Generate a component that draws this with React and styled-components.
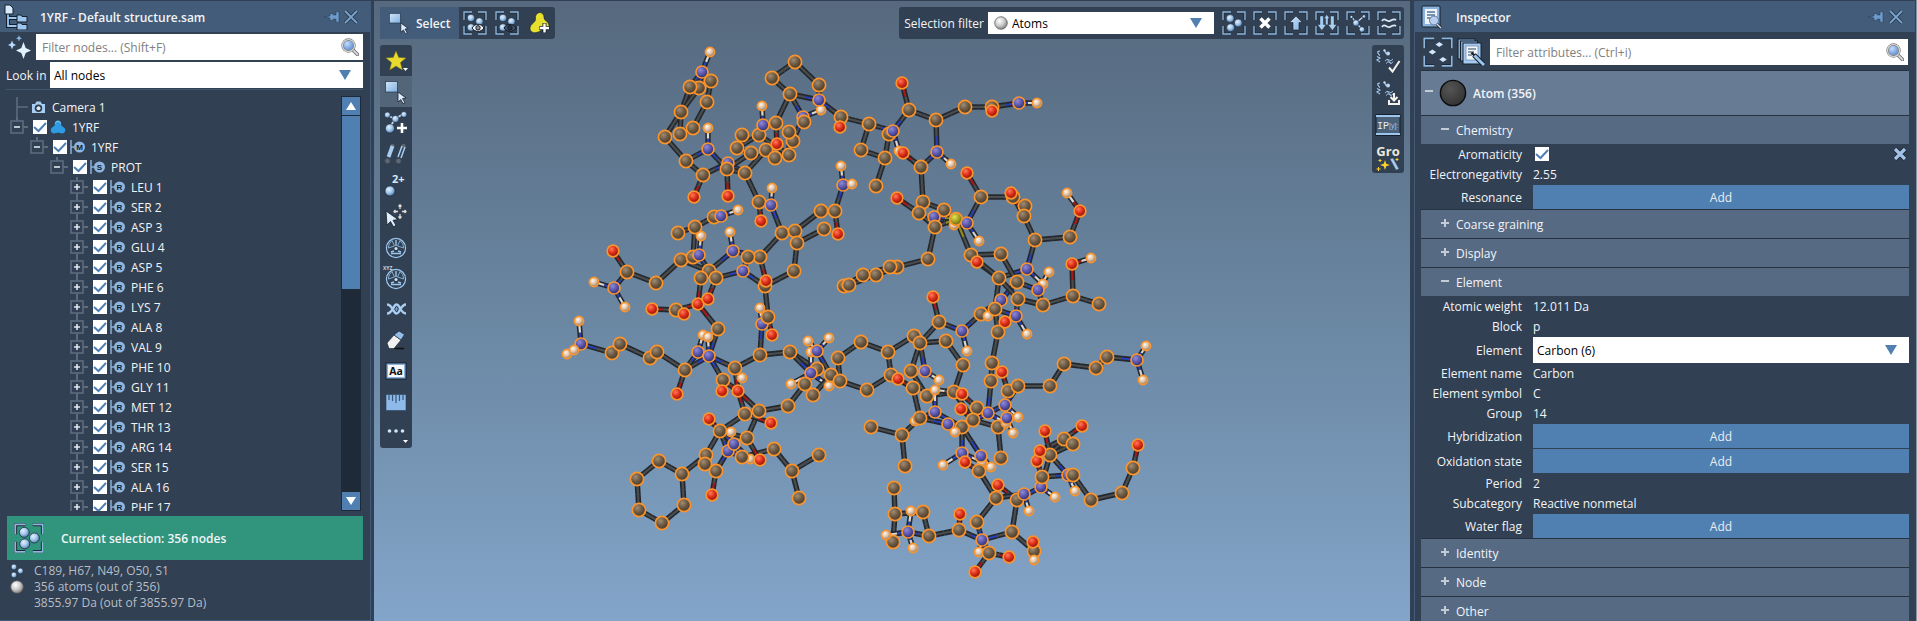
import React from "react";
import styled, { createGlobalStyle } from "styled-components";

const GlobalStyle = createGlobalStyle`
  * {
    box-sizing: border-box;
  }

  body {
    margin: 0;
    background: #314052;
    color: #f2f4f7;
    font-family: "Open Sans", "Noto Sans", sans-serif;
    font-size: 12px;
    line-height: 16px;
    overflow: hidden;
  }

  button, input, select {
    margin: 0;
    padding: 0;
    border: 0;
    border-radius: 0;
    background: none;
    color: inherit;
    font: inherit;
  }

  svg {
    display: block;
    flex: none;
  }
`;

const Screen = styled.div`
  display: flex;
  height: 100vh;
  overflow: hidden;
`;

const Panel = styled.aside`
  width: ${(props) => props.$width};
  flex: none;
  display: flex;
  flex-direction: column;
  margin-top: 1px;
  border: solid #435b78;
  border-width: ${(props) => props.$border};
  overflow: hidden;
`;

const PanelHeader = styled.header`
  height: 31px;
  flex: none;
  display: flex;
  align-items: center;
  gap: ${(props) => props.$gap};
  padding: 0 12px 0 ${(props) => props.$left};
  background: #435c79;
`;

const PanelTitle = styled.h1`
  flex: 1;
  margin: 0;
  padding: 2px 0 0 8px;
  font-size: 12px;
  font-weight: 600;
`;

const IconButton = styled.button`
  display: flex;
  align-items: center;
  justify-content: center;
`;

const FilterRow = styled.div`
  display: flex;
  flex: none;
  align-items: center;
  padding: ${(props) => props.$pad};
`;

const FilterButtons = styled.div`
  display: flex;
  align-items: center;
  gap: 4px;
  margin-right: 5px;
`;

const LookIn = styled.label`
  width: 44px;
  padding-top: 2px;
`;

const Field = styled.div`
  position: relative;
  flex: 1;
  min-width: 0;
  height: ${(props) => props.$height || "26px"};
`;

const TextInput = styled.input`
  width: 100%;
  height: 100%;
  padding: 0 32px 0 6px;
  background: #fff;
  color: #000;

  &::placeholder {
    color: #808080;
    opacity: 1;
  }
`;

const SelectInput = styled.select`
  width: 100%;
  height: 100%;
  padding: 2px 28px 0 ${(props) => props.$left || "4px"};
  appearance: none;
  background: #fff;
  color: #000;
`;

const FieldIcon = styled.span`
  position: absolute;
  top: 0;
  bottom: 0;
  ${(props) => props.$side}: ${(props) => props.$inset};
  display: flex;
  align-items: center;
  pointer-events: none;
`;

const CheckBox = styled.input.attrs({ type: "checkbox" })`
  width: 14px;
  height: 14px;
  flex: none;
  appearance: none;
  background: #fff;

  &:checked {
    background: #fff
      url("data:image/svg+xml,%3Csvg xmlns='http://www.w3.org/2000/svg' viewBox='0 0 14 14'%3E%3Cpath d='M1 7l4.5 4L13 3' fill='none' stroke='%23507fb1' stroke-width='2'/%3E%3C/svg%3E");
  }
`;

/* structure tree */

const TreeArea = styled.div`
  flex: 1;
  min-height: 0;
  display: flex;
  margin: 1px 7px 0 6px;
  padding-top: 6px;
  border-top: 1px solid #42566d;
`;

const Tree = styled.ul`
  flex: 1;
  margin: 0;
  padding: 1px 0 0;
  list-style: none;
  overflow: hidden;
`;

const TreeRow = styled.li`
  height: 20px;
  display: flex;
  align-items: center;
  padding-left: ${(props) => props.$level * 20}px;
`;

const TreeLabel = styled.label`
  display: flex;
  align-items: center;
  margin-left: 5px;
`;

const TreeIcon = styled.span`
  display: flex;
  margin-left: 3px;
`;

const TreeText = styled.span`
  padding: 2px 0 0 6px;
`;

const ScrollBar = styled.div`
  width: 20px;
  display: flex;
  flex-direction: column;
  margin-right: 2px;
  padding: 1px;
  background: #1e2a38;
`;

const ScrollButton = styled.button`
  height: 18px;
  flex: none;
  display: flex;
  align-items: center;
  justify-content: center;
  background: #507fb1;
`;

const ScrollTrack = styled.div`
  flex: 1;
  padding-top: 1px;
`;

const ScrollThumb = styled.div`
  height: 46%;
  background: #507fb1;
`;

const Selection = styled.div`
  height: 44px;
  flex: none;
  display: flex;
  align-items: center;
  gap: 17px;
  margin: 5px 7px 0;
  padding: 0 7px;
  background: #31947d;
  font-weight: 600;
`;

const SelectionText = styled.span`
  padding-top: 2px;
`;

const Stats = styled.ul`
  height: 60px;
  flex: none;
  margin: 0;
  padding: 3px 10px 0;
  list-style: none;
  color: #b8bec6;
`;

const Stat = styled.li`
  height: 16px;
  display: flex;
  align-items: center;
`;

const StatIcon = styled.span`
  width: 24px;
  display: flex;
`;

/* viewport */

const Viewport = styled.main`
  position: relative;
  flex: 1;
  min-width: 0;
  margin: 1px 4px 0 3px;
  padding: 6px;
  display: flex;
  flex-direction: column;
  gap: 6px;
  background: linear-gradient(#56697e, #6c89a5 55%, #83a5c9);
  overflow: hidden;
`;

const Canvas = styled.svg`
  position: absolute;
  inset: 0;
  width: 100%;
  height: 100%;
`;

const Bars = styled.div`
  position: relative;
  display: flex;
  align-items: flex-start;
  justify-content: space-between;
`;

const ToolBar = styled.div`
  display: flex;
  flex-direction: ${(props) => (props.$vertical ? "column" : "row")};
  align-items: center;
  border-radius: 3px;
  background: #314052;
  overflow: hidden;
`;

const ToolButton = styled.button`
  position: relative;
  width: ${(props) => props.$width || "32px"};
  height: ${(props) => props.$height || "31px"};
  display: flex;
  align-items: center;
  justify-content: center;
  background: ${(props) => (props.$active ? "#526579" : "none")};
`;

const ModeButton = styled.button`
  height: 32px;
  display: flex;
  align-items: center;
  gap: 6px;
  padding: 0 9px 0 8px;
  background: #435c79;
  font-weight: 600;
`;

const ModeName = styled.span`
  padding-top: 2px;
`;

const FilterLabel = styled.label`
  padding: 2px 4px 0 5px;
`;

const SelectionField = styled.div`
  width: 226px;
  display: flex;
  margin-right: 4px;
`;

const Corner = styled.svg`
  position: absolute;
  right: 4px;
  bottom: 5px;
`;

const Gro = styled.span`
  font-weight: 700;
  font-size: 13px;
  line-height: 14px;
  color: #e9eadf;
`;

const GroStack = styled.span`
  display: flex;
  flex-direction: column;
  align-items: center;
`;

/* inspector */

const Body = styled.div`
  flex: 1;
  min-height: 0;
  padding: 0 6px;
  overflow: hidden;
`;

const GroupHeader = styled.button`
  width: 100%;
  height: 45px;
  display: flex;
  align-items: center;
  gap: 6px;
  padding: 0 4px;
  border-top: 1px solid #26323f;
  background: #677b95;
  font-weight: 600;
`;

const GroupName = styled.span`
  padding-top: 2px;
`;

const SectionHeader = styled.button`
  width: 100%;
  height: 29px;
  display: flex;
  align-items: center;
  gap: 7px;
  padding: 2px 20px 0;
  border-top: 1px solid #26323f;
  background: #566a84;
`;

const Sign = styled.svg`
  margin-bottom: 4px;
`;

const Property = styled.div`
  min-height: 20px;
  display: grid;
  grid-template-columns: 101px 1fr;
  column-gap: 11px;
  align-items: center;
  padding-top: ${(props) => (props.$control ? "1px" : "0")};
`;

const PropertyName = styled.label`
  padding-top: 2px;
  text-align: right;
`;

const PropertyValue = styled.span`
  padding-top: 2px;
`;

const PropertyControls = styled.span`
  display: flex;
  align-items: center;
  justify-content: space-between;
  padding: 0 2px;
`;

const AddButton = styled.button`
  height: 24px;
  padding-top: 2px;
  background: #507fb1;
  color: #e9eef4;
`;

const Edge = styled.div`
  width: 2px;
  flex: none;
  border-right: 1px solid #8795a5;
`;

/* icons */

const HiddenSvg = styled.svg`
  position: absolute;
`;

const Defs = () => (
  <HiddenSvg width="0" height="0" aria-hidden="true">
    <defs>
      {[
        ["gC", "#a08c74", "#6d5a44", "#453626"],
        ["gN", "#8f8bd6", "#5a56ac", "#2e2b62"],
        ["gO", "#ff7a5c", "#dc2c18", "#84140b"],
        ["gH", "#fff6ea", "#dfc4aa", "#8c7766"],
        ["gS", "#e6e25c", "#a5a321", "#5f5e0e"],
        ["gBlue", "#e4f0fb", "#a3c8ec", "#4e76a4"],
        ["gGrey", "#ffffff", "#cfcfcf", "#7d7d7d"],
        ["gDark", "#555", "#444", "#333"],
        ["gLens", "#c5dcfa", "#86aee6", "#5b86c6"],
      ].map(([id, a, b, c]) => (
        <radialGradient key={id} id={id} cx="38%" cy="34%" r="70%">
          <stop offset="0" stopColor={a} />
          <stop offset="0.5" stopColor={b} />
          <stop offset="1" stopColor={c} />
        </radialGradient>
      ))}
      <linearGradient id="gSky" x1="0" y1="0" x2="1" y2="1">
        <stop offset="0" stopColor="#d3e6f8" />
        <stop offset="1" stopColor="#7fb0e0" />
      </linearGradient>
    </defs>
  </HiddenSvg>
);

const Ball = ({ x, y, r, fill = "gBlue" }) => (
  <circle cx={x} cy={y} r={r} fill={`url(#${fill})`} stroke="#1b2635" strokeWidth="0.6" />
);

const BallIcon = ({ size, fill }) => (
  <svg width={size} height={size} viewBox="0 0 14 14">
    <circle cx="7" cy="7" r="6.3" fill={`url(#${fill})`} stroke={fill === "gDark" ? "#0c0c0c" : "#555"} strokeWidth="0.7" />
  </svg>
);

const Bracket = ({ size = 24, children }) => (
  <svg width={size} height={size} viewBox="0 0 24 24">
    <path d="M1 9V1h8M15 1h8v8M23 15v8h-8M9 23H1v-8" fill="none" stroke="#1d2837" strokeWidth="3" />
    <path d="M1 9V1h8M15 1h8v8M23 15v8h-8M9 23H1v-8" fill="none" stroke="#8fb6dd" strokeWidth="1.4" />
    {children}
  </svg>
);

const ThreeBalls = () => (
  <>
    <Ball x={8.2} y={7.5} r={4} />
    <Ball x={16.3} y={12} r={4} />
    <Ball x={8.6} y={16.7} r={4} />
  </>
);

const EyeBalls = ({ dark }) => (
  <Bracket>
    <Ball x={8} y={7} r={3.8} />
    <Ball x={16.5} y={10.5} r={3.8} />
    <Ball x={8} y={16.5} r={3.8} />
    <path d="M9 17c3-5 9-5 12 0c-3 4.5-9 4.5-12 0z" fill={dark ? "#435468" : "#f4f6f8"} stroke="#141b25" />
    <circle cx="15" cy="16.8" r="2.2" fill={dark ? "#27374c" : "#8b959f"} stroke="#141b25" />
  </Bracket>
);

const Magnifier = () => (
  <svg width="18" height="18" viewBox="0 0 18 18">
    <path d="M11 11l5.5 5.5" stroke="#6f6f6f" strokeWidth="3.6" strokeLinecap="round" />
    <path d="M12 12l4.5 4.5" stroke="#d6d6d6" strokeWidth="1.8" strokeLinecap="round" />
    <circle cx="7.5" cy="7.5" r="6" fill="url(#gLens)" stroke="#7a7a7a" strokeWidth="2.4" />
    <circle cx="7.5" cy="7.5" r="6" fill="none" stroke="#dcdcdc" strokeWidth="1.1" />
  </svg>
);

const Triangle = () => (
  <svg width="12" height="10" viewBox="0 0 12 10">
    <path d="M0 0h12L6 10z" fill="#507fb1" />
  </svg>
);

const PinIcon = () => (
  <svg width="16" height="12" viewBox="0 0 16 12">
    <path d="M0 6l6-1V2.5h2L9.5 4H12V.8h3v10.400h-3V8H9.5L8 9.500H6V7z" fill="#6d9ccc" stroke="#24344a" strokeWidth="0.5" />
  </svg>
);

const CloseIcon = () => (
  <svg width="14" height="14" viewBox="0 0 14 14">
    <path d="M1 1l12 12M13 1L1 13" stroke="#24344a" strokeWidth="3.4" />
    <path d="M1 1l12 12M13 1L1 13" stroke="#7ba5cf" strokeWidth="1.8" />
  </svg>
);

const DocumentIcon = () => (
  <svg width="24" height="26" viewBox="0 0 24 26">
    <path d="M4 10v12h12M4 14h12" stroke="#16202d" strokeWidth="4" fill="none" />
    <path d="M4 10v12h12M4 14h12" stroke="#9cc6ee" strokeWidth="1.8" fill="none" />
    <path d="M1 1h5l3 3v6H1z" fill="#d9ebfb" stroke="#16202d" />
    <path d="M13 11h4l1 1.5h5V18H13zM13 19h4l1 1.5h5V26H13z" fill="#9cc6ee" stroke="#16202d" />
  </svg>
);

const SparkleIcon = () => (
  <svg width="23" height="24" viewBox="0 0 23 24">
    <path d="M15.5 7l2.2 6 5.3 2.5-5.3 2.5-2.2 6-2.2-6-5.3-2.5 5.3-2.5z" fill="#e3f1fd" />
    <path d="M4 5.500l1.200 3L8 10 5.200 11.300 4 14.500l-1.200-3.200L0 10l2.800-1.500z" fill="#b9dafa" />
    <path d="M11 0l.8 2.300L14 3.300l-2.200 1L11 6.500l-.8-2.200L8 3.300l2.200-1z" fill="#8ab8e6" />
  </svg>
);

const InspectorIcon = () => (
  <svg width="22" height="24" viewBox="0 0 22 24">
    <rect x="1" y="1" width="18" height="21" rx="1" fill="#8ab2dc" stroke="#16202d" />
    <rect x="4" y="4" width="12" height="15" fill="#eef4fa" />
    <path d="M6 7h8M6 10h8M6 13h5" stroke="#54749a" strokeWidth="1.4" />
    <path d="M15 18l5 5" stroke="#16202d" strokeWidth="3" />
    <path d="M15 18l5 5" stroke="#d3d9df" strokeWidth="1.5" />
    <circle cx="13" cy="15.5" r="4.5" fill="#b7cfee" stroke="#5d7694" />
  </svg>
);

const AttributesIcon = () => (
  <Bracket size={30}>
    <path d="M10 6l3-2 3 2-3 2zM4.5 12l3-2 3 2-3 2zM13 18l3-2 3 2-3 2z" fill="#cfe6fb" />
  </Bracket>
);

const NotesIcon = () => (
  <svg width="28" height="28" viewBox="0 0 28 28">
    <g fill="#7ea8d6" stroke="#16202d">
      <rect x="1" y="1" width="17" height="20" />
      <rect x="3.5" y="3" width="17" height="20" />
      <rect x="6" y="5" width="18" height="21" fill="#a6caef" />
    </g>
    <rect x="9" y="8" width="12" height="14" fill="#f0f5fa" stroke="#54749a" strokeWidth="0.6" />
    <path d="M11 11h8M11 14h6M11 17h4" stroke="#33455c" strokeWidth="1.2" />
    <path d="M14.5 14.5l3 3" stroke="#16202d" strokeWidth="2.4" />
    <path d="M17 17l10 10" stroke="#16202d" strokeWidth="5" />
    <path d="M17.5 17.5l9.5 9.5" stroke="#9cc6ee" strokeWidth="3" />
  </svg>
);

const CameraIcon = () => (
  <svg width="15" height="13" viewBox="0 0 15 13">
    <path d="M1 3h3l1.5-2.5h4L11 3h3v9H1z" fill="#a6cdf2" />
    <circle cx="7.5" cy="7.3" r="3.7" fill="#2b3948" />
    <circle cx="7.5" cy="7.3" r="2" fill="#dfe9f3" />
  </svg>
);

const ModelIcon = () => (
  <svg width="16" height="14" viewBox="0 0 16 14">
    <path
      d="M8 .6c2 0 3.200 1.400 3.200 3.200 0 1.400.2 2.200 1.600 2.900 3.600 1.600 3.200 6.500-.4 6.700-1.800.1-2.800-.7-4.400-.7s-2.600.8-4.400.7C0 13.200-.4 8.300 3.200 6.700 4.600 6 4.800 5.200 4.800 3.800 4.800 2 6 .6 8 .6z"
      fill="#2f9be3"
    />
    <path d="M5.500 3.500A2.500 2.500 0 0 1 8 1.200a2.500 2.500 0 0 1 2.500 2.300" fill="none" stroke="#8ccdf7" strokeWidth="0.9" />
  </svg>
);

const LetterIcon = ({ letter }) => (
  <svg width="15" height="14" viewBox="0 0 15 14">
    <path d="M1 0v14M1 7h4" stroke="#8ab0d8" strokeWidth="1.5" />
    <circle cx="9.5" cy="7" r="5.5" fill="#8fb6e0" />
    <text x="9.5" y="9.8" textAnchor="middle" fontSize="8" fontFamily="Liberation Sans, sans-serif" fontWeight="700" fill="#111c2c">
      {letter}
    </text>
  </svg>
);

const Expander = ({ open, tail }) => (
  <svg width="22" height="20" viewBox="0 0 22 20">
    <path d={`M11 0v4M17 10h5${tail ? "M11 16v4" : ""}`} stroke="#5d6b7f" strokeWidth="2" />
    <rect x="5" y="4" width="12" height="12" fill="none" stroke="#5d6b7f" strokeWidth="1.6" />
    <path d={open ? "M8 10h6" : "M8 10h6M11 7v6"} stroke="#e2e7ee" strokeWidth="1.6" />
  </svg>
);

const Branch = () => (
  <svg width="22" height="20" viewBox="0 0 22 20">
    <path d="M11 0v20M11 10h11" stroke="#5d6b7f" strokeWidth="1.6" />
  </svg>
);

const Arrow = ({ up }) => (
  <svg width="10" height="8" viewBox="0 0 10 8">
    <path d={up ? "M0 8h10L5 0z" : "M0 0h10L5 8z"} fill="#fff" />
  </svg>
);

const PlusMinus = ({ open }) => (
  <Sign width="8" height="8" viewBox="0 0 8 8">
    <path d={open ? "M0 4h8" : "M0 4h8M4 0v8"} stroke="#c3ccd6" strokeWidth="2" />
  </Sign>
);

const RectCursor = ({ size = 24 }) => (
  <svg width={size} height={size} viewBox="0 0 24 24">
    <rect x="1.5" y="1.5" width="12" height="10.5" fill="url(#gSky)" stroke="#24344a" strokeWidth="0.7" />
    <path d="M14 12l8 6-3.5.6 2.5 4-2 1-2.2-4L14 22z" fill="#dcecfb" stroke="#16202d" strokeWidth="0.8" />
  </svg>
);

const Wheel = ({ labelled }) => (
  <svg width="28" height="28" viewBox="0 0 28 28">
    {labelled && (
      <text x="1" y="6" fontSize="5" fontWeight="700" fill="#c9d3de">
        XYZ
      </text>
    )}
    <g fill="none" stroke="#9cc6ee">
      <circle cx="14" cy="15" r="9.6" strokeWidth="1.2" />
      <path d="M12.5 13L10 7.5Q6.5 10 6.3 15zM15.5 13L18 7.5Q21.5 10 21.7 15z" strokeWidth="0.8" />
      <path d="M14 7v6M9 19l3-1M19 19l-3-1M9 20.5h10" strokeWidth="1.4" />
    </g>
    <circle cx="14" cy="15.5" r="1.5" fill="#d4e8fb" />
  </svg>
);

const SvgTool = ({ children }) => (
  <svg width="24" height="24" viewBox="0 0 24 24">
    {children}
  </svg>
);

const tools = [
  {
    name: "Favorites",
    menu: true,
    icon: (
      <SvgTool>
        <path d="M12 2l2.7 6.5 7.3.5-5.6 4.6L18.3 21 12 17l-6.3 4 1.9-7.400L2 9l7.300-.5z" fill="#e8d92e" stroke="#8b7d14" strokeWidth="0.5" />
      </SvgTool>
    ),
  },
  { name: "Select", active: true, icon: <RectCursor /> },
  {
    name: "Add atoms",
    icon: (
      <SvgTool>
        <path d="M3 4l8 4 8-5M11 8l-5 8" stroke="#c8d9ea" strokeWidth="1.8" fill="none" />
        <Ball x={3.5} y={4} r={3} />
        <Ball x={11.5} y={8} r={3.6} />
        <Ball x={20} y={3.5} r={3} />
        <Ball x={6} y={17.5} r={4.6} />
        <path d="M18 12v10M13 17h10" stroke="#fff" strokeWidth="2.6" />
      </SvgTool>
    ),
  },
  {
    name: "Bonds",
    icon: (
      <SvgTool>
        <g fill="#5c6674" stroke="#39434f">
          <circle cx="8.5" cy="4" r="2.6" />
          <circle cx="19.5" cy="4" r="2.6" />
          <circle cx="3.5" cy="19" r="2.9" />
          <circle cx="14.5" cy="19" r="2.9" />
        </g>
        <path d="M8.5 4L4.5 15" stroke="#a9cdf0" strokeWidth="3.8" />
        <path d="M18 4l-4 11M21 5l-4 11" stroke="#a9cdf0" strokeWidth="1.5" />
      </SvgTool>
    ),
  },
  {
    name: "Charge",
    icon: (
      <SvgTool>
        <text x="8" y="10" fontSize="11" fontWeight="700" fill="#d6e8fa">
          2+
        </text>
        <Ball x={6} y={18} r={5} />
      </SvgTool>
    ),
  },
  {
    name: "Move",
    icon: (
      <SvgTool>
        <path d="M2 7l12 8.5-5 .8 3 5-2.5 1.5-3-5.3L3 21z" fill="#e1effc" stroke="#16202d" strokeWidth="0.8" />
        <path d="M16 1v4M16 10v4M10 7.5h4M18 7.5h4M14.5 2.5L16 .8l1.5 1.7M14.5 12.5l1.5 1.7 1.5-1.7M11.5 6L10 7.5 11.5 9M20.5 6L22 7.5 20.5 9" stroke="#e5dfd3" strokeWidth="1.3" fill="none" />
      </SvgTool>
    ),
  },
  { name: "Rotate", icon: <Wheel /> },
  { name: "Rotate along axes", icon: <Wheel labelled /> },
  {
    name: "Twist",
    icon: (
      <SvgTool>
        <path d="M3 7.5c6 0 6 9 9.5 9s4-9 9.5-9M3 16.5c6 0 6-9 9.5-9s4 9 9.5 9" fill="none" stroke="#a9cdf0" strokeWidth="2.4" />
        <path d="M10.5 12h4M12.5 10v4" stroke="#7fa5cc" />
      </SvgTool>
    ),
  },
  {
    name: "Erase",
    icon: (
      <SvgTool>
        <path d="M10 20.5h10" stroke="#111" strokeWidth="1.6" />
        <path d="M3 15l7-8 7 5-7 8.5H5z" fill="#f1f1f1" stroke="#16202d" strokeWidth="0.6" />
        <path d="M10 7l5-4 5.5 3.5L17 12z" fill="#93bde8" stroke="#16202d" strokeWidth="0.6" />
      </SvgTool>
    ),
  },
  {
    name: "Label",
    icon: (
      <SvgTool>
        <rect x="2" y="4" width="20" height="16" fill="#8ab2dc" stroke="#16202d" />
        <rect x="4" y="6" width="16" height="12" fill="#f7f9fb" />
        <text x="12" y="15.8" textAnchor="middle" fontSize="10.5" fontWeight="700" fill="#111">
          Aa
        </text>
      </SvgTool>
    ),
  },
  {
    name: "Measure",
    icon: (
      <SvgTool>
        <rect x="2" y="4.5" width="20" height="16" fill="#8dbae8" stroke="#2b4260" strokeWidth="0.6" />
        <path d="M5 5v5M8.5 5v6M12 5v8M15.5 5v6M19 5v5" stroke="#385778" strokeWidth="1.2" />
      </SvgTool>
    ),
  },
  {
    name: "More",
    menu: true,
    icon: (
      <SvgTool>
        <circle cx="5.5" cy="10" r="1.8" fill="#d3e6f8" />
        <circle cx="12" cy="10" r="1.8" fill="#d3e6f8" />
        <circle cx="18.5" cy="10" r="1.8" fill="#d3e6f8" />
      </SvgTool>
    ),
  },
];

const selectionTools = [
  { name: "Select atoms", icon: <ThreeBalls /> },
  { name: "Clear selection", icon: <path d="M7.5 7.5l9 9M16.5 7.5l-9 9" stroke="#fff" strokeWidth="3.4" /> },
  { name: "Expand up", icon: <path d="M12 5l6.5 6.5H15V19H9v-7.5H5.5z" fill="url(#gSky)" stroke="#16202d" strokeWidth="0.6" /> },
  {
    name: "Expand down",
    icon: <path d="M5 5h3.4v8.5h2.8l-4.4 6-4.400-6H5zM15.600 5H19v8.500h2.800l-4.400 6-4.400-6h2.600zM11.800 3.500l2.800 4h-1.600V14h-2.400V7.500H9z" fill="#a9cff3" stroke="#16202d" strokeWidth="0.4" />,
  },
  {
    name: "Expand connected",
    icon: (
      <>
        <path d="M10 12l7-6M10 12L6 6M10 12l6 6" stroke="#c8d9ea" strokeWidth="1.3" />
        <Ball x={10} y={12} r={3.2} />
        <Ball x={18} y={5.5} r={1.8} />
        <Ball x={5.5} y={6} r={1.6} />
        <Ball x={16} y={18.5} r={2.8} />
      </>
    ),
  },
  {
    name: "Select similar",
    icon: <path d="M5 10c2.5-4.5 5 1.5 8 0s4-2.5 6-1M5 16c2.5-4.5 5 1.5 8 0s4-2.5 6-1" fill="none" stroke="#dbe8f5" strokeWidth="1.7" />,
  },
];

const Ligands = ({ children }) => (
  <svg width="26" height="26" viewBox="0 0 26 26">
    <g fill="none" stroke="#a6c8ea" strokeWidth="1.2">
      <path d="M5 3q-3 0-2 2t2 2.5M2 8.5l3 1.5-3 2 3 2M9.5 2.5l1.5 3 3 .5" />
      <path d="M10 13q2-3 4-1t4-1M11 15.5q2-3 4-1t3-1M12 11l4 5" strokeWidth="0.9" />
    </g>
    <circle cx="13" cy="5.5" r="2" fill="#b9d7f3" />
    <circle cx="9.5" cy="2.5" r="1.2" fill="#b9d7f3" />
    {children}
  </svg>
);

const apps = [
  {
    name: "Check ligands",
    icon: (
      <Ligands>
        <path d="M14 19.5l3.5 4L24.5 13" fill="none" stroke="#f4f1ec" strokeWidth="2" />
      </Ligands>
    ),
  },
  {
    name: "Load ligands",
    icon: (
      <Ligands>
        <path d="M14 20v4h10v-4M19 13v7M15.5 17L19 20.5l3.500-3.500" fill="none" stroke="#f4f1ec" strokeWidth="2" />
      </Ligands>
    ),
  },
  {
    name: "Python console",
    icon: (
      <svg width="26" height="24" viewBox="0 0 26 24">
        <rect x="1" y="1.5" width="24" height="21" fill="#4a617a" stroke="#16202d" />
        <path d="M1 3h24M1 21h24" stroke="#9cc6ee" strokeWidth="2" />
        <text x="2" y="16" fontSize="10" fontFamily="Liberation Mono, monospace" fill="#e6edf5">
          IP
        </text>
        <text x="14" y="15" fontSize="7" fontFamily="Liberation Sans, sans-serif" fill="#9cc6ee">
          [y]:
        </text>
      </svg>
    ),
  },
  {
    name: "Gromacs wizard",
    icon: (
      <GroStack>
        <Gro>Gro</Gro>
        <svg width="24" height="13" viewBox="0 0 24 13">
          <path d="M14 1l3-1 6 11-3 1z" fill="#a9cdf0" stroke="#3d5878" strokeWidth="0.6" />
          <path d="M9 2l1.200 3.800L14 7l-3.800 1.200L9 12 7.800 8.200 4 7l3.800-1.200z" fill="#ffd32a" />
          <path d="M2.500 9v4M.5 11h4M4 1v3M2.500 2.500h3M21 0v3M19.500 1.500h3" stroke="#ffd32a" />
        </svg>
      </GroStack>
    ),
  },
];

/* molecule: ten atoms per line, positions on the canvas */

const atoms = `
H710,52 N702,72 C711,81 C699,88 C690,87 C707,102 C681,112 C693,128 C680,134 C665,137
C686,161 N708,149 H708,128 C703,175 O694,197 N728,163 C727,169 O728,196 C737,148 C742,135
C759,135 C751,153 C745,173 N763,125 H762,106 C776,123 O777,144 C766,150 C775,158 C789,155
C793,141 C789,132 N803,117 C804,122 H821,110 C790,94 C772,78 C795,62 C819,85 N819,100
C841,117 O840,127 C759,202 O761,221 N771,205 H772,188 C782,233 C795,231 C797,243 C824,229
C821,211 C835,211 N843,185 H841,166 H852,184 O838,234 C794,271 C765,286 O766,281 N743,271
C760,257 N733,251 H730,232 C709,271 C716,278 C701,278 C681,260 C693,257 N699,255 H701,236
C656,283 C627,272 O613,251 N614,288 H594,282 H625,307 C678,233 C695,227 C714,217 N721,216
H738,210 C748,257 O652,309 C676,310 O684,314 O698,304 O708,299 C718,329 H579,321 N581,344
H567,354 H574,350 C612,353 C620,344 C650,358 C657,352 C685,370 O677,394 N698,352 H703,335
N709,356 H708,337 C723,380 O722,391 C735,368 H742,378 O738,391 C745,414 O771,423 C760,355
N762,324 H760,308 C768,317 O772,335 C790,352 C817,369 N811,373 H811,352 H791,384 H829,386
N817,351 H808,341 H829,338 C831,375 C813,395 C805,384 C788,406 C759,411 C747,438 O709,419
C720,431 N728,451 N734,444 H750,459 C742,457 O760,460 C774,449 C792,471 C819,455 C799,498
C706,455 C705,464 C716,471 O712,495 C682,474 C659,461 C637,479 C639,510 C662,523 C684,505
H731,432 C869,124 C861,150 C885,158 C876,186 C889,134 N893,131 C909,110 O902,83 C936,120
C965,107 C992,107 O992,111 N1019,103 H1037,103 H899,151 O903,153 C921,167 N937,152 H951,164
C923,202 C944,210 C919,213 O897,198 N934,217 C935,227 H954,225 S956,219 N967,223 H979,241
C981,197 O967,173 C1013,197 O1011,193 C1025,206 C1024,216 C1035,240 C1070,237 O1080,211 H1067,193
N1027,269 H1043,284 H1049,272 C971,255 O977,262 C1001,254 C999,278 C1017,282 N1038,290 C1018,299
C1043,305 C1073,296 O1072,264 H1091,258 C1099,304 C928,259 C897,267 C890,267 C876,275 C863,275
C844,286 C849,285 O933,297 C939,322 N962,331 H967,351 C981,314 H988,316 N1001,300 C995,309
N1016,316 O1005,322 C998,332 H1027,334 C992,363 C991,381 O1002,372 C1008,391 C1018,386 C1050,386
C1064,364 C1096,368 C1107,357 N1137,360 H1146,346 H1143,380 N1005,405 H1018,417 C861,342 C838,358
C840,381 C867,390 C891,375 C888,352 C914,336 C920,343 C946,341 C963,365 C954,392 C927,396
C911,371 N925,371 H939,380 C913,388 O898,379 H935,390 N935,412 H915,421 C920,418 C902,435
C871,427 C905,466 O962,394 C977,408 N988,413 C962,427 O961,409 C973,420 N948,424 H955,432
C998,427 C1001,458 H1006,423 N1007,418 H1013,433 N962,453 H943,465 H982,462 H991,467 N981,456
O965,462 C979,471 C996,498 O998,485 C1017,500 N1024,494 H1029,511 N1041,487 H1055,497 C1042,477
O1037,461 C1050,455 O1040,451 O1045,431 C1064,439 C1073,444 O1082,426 N1068,475 C1073,475 H1075,491
C1091,500 C1122,493 C1133,468 O1138,445 C977,522 N982,540 C1012,532 C1034,551 O1033,542 H1034,560
H979,552 C989,553 O1009,557 O975,572 C959,530 O960,514 C929,536 C923,512 C895,514 C894,488
C893,542 N908,532 H911,511 H886,535 H913,548
`
  .trim()
  .split(/\s+/)
  .map((item) => {
    const [x, y] = item.slice(1).split(",").map(Number);
    return { element: item[0], x, y };
  });

const bonds = `
0-1 1-3 1-4 1-2 4-6 3-6 6-8 8-7 7-5 5-2 6-9 9-10 10-11 11-12 10-13 13-14 13-15 11-16 16-17 15-22
16-21 21-18 18-19 18-20 16-22 20-29 20-23 23-24 23-25 25-35 25-26 22-42 22-27 27-28 28-29 29-30
30-31 29-31 32-30 32-34 32-35 35-36 36-37 37-38 38-39 39-35 39-40 40-41 40-151 42-43 42-44 44-45
44-46 46-47 47-48 48-49 47-50 50-51 51-52 52-53 52-54 51-55 46-60 60-61 61-62 61-63 60-58 48-56
56-57 57-59 59-64 59-81 63-66 66-70 70-71 71-72 71-73 73-74 73-75 67-68 68-69 67-77 76-77 77-78
78-79 79-80 68-63 65-85 64-86 63-65 83-82 83-84 83-85 85-87 87-100 57-112 112-113 110-111 110-112
110-109 89-88 89-90 89-91 89-92 92-93 93-94 94-95 95-96 96-97 96-98 98-99 96-100 100-101 100-102
102-103 102-106 106-127 100-104 104-106 106-107 104-109 109-114 114-115 116-114 116-117 116-118
116-119 120-121 120-122 120-123 123-124 124-125 115-125 125-126 126-127 127-128 107-108 107-130
130-129 130-132 132-133 130-140 140-144 144-145 145-146 146-147 147-148 148-149 149-144 140-141
131-130 131-142 142-143 142-141 134-136 128-135 128-130 131-134 136-137 137-138 137-139 107-127
151-152 152-153 153-154 153-155 151-156 156-157 157-158 157-159 159-160 160-161 161-163 163-164
161-162 156-165 159-168 168-169 168-167 167-166 167-170 170-171 172-173 170-172 172-175 174-171
174-176 177-174 177-193 177-175 175-205 178-179 178-180 180-181 180-182 182-183 182-184 184-185
183-185 185-186 186-187 187-188 188-189 186-190 190-191 190-196 196-194 193-195 195-197 193-196
197-198 197-218 196-219 198-192 198-200 199-200 196-199 200-201 201-202 202-203 201-204 205-206
206-208 208-211 207-209 209-210 210-211 212-213 213-214 214-215 214-216 216-218 216-219 213-245
219-220 220-199 220-223 221-222 219-222 222-224 224-225 225-264 226-227 227-228 228-229 229-230
230-231 231-232 232-233 233-234 233-235 228-236 236-237 236-264 238-239 239-240 240-241 241-242
242-243 243-238 243-244 244-245 245-246 246-247 247-248 248-249 249-250 250-245 245-251 251-252
242-253 253-254 253-258 240-123 258-259 259-260 259-261 258-268 268-265 256-257 256-255 256-265
265-264 265-275 275-276 275-277 279-278 265-279 264-272 248-267 262-263 263-267 266-267 267-270
248-255 270-271 270-273 273-274 268-269 280-281 279-281 281-282 282-283 283-284 282-285 285-286
284-287 287-288 287-289 287-291 289-290 291-292 291-294 292-294 294-296 291-295 291-293 291-297
289-297 297-299 298-300 300-301 301-302 302-303 282-304 304-305 305-306 305-310 284-306 306-307
307-308 307-309 305-311 311-312 311-313 305-314 314-315 314-316 316-317 317-318 318-319 318-320
316-321 321-322 321-323 321-324
`
  .trim()
  .split(/\s+/)
  .map((pair) => pair.split("-").map((index) => atoms[index]));

const radius = { C: 6.6, N: 6, O: 5.8, H: 4.6, S: 6.3 };
const bondColor = { C: "#4b4e50", N: "#2a3fb5", O: "#a51a1a", H: "#d8d8d8", S: "#8f8c1c" };

const HalfBond = ({ from, to }) => {
  const x = (from.x + to.x) / 2;
  const y = (from.y + to.y) / 2;
  return (
    <>
      <path d={`M${from.x} ${from.y}L${x} ${y}`} stroke="#23272b" strokeWidth="5.4" />
      <path d={`M${from.x} ${from.y}L${x} ${y}`} stroke={bondColor[from.element]} strokeWidth="2.2" />
    </>
  );
};

const Molecule = () => (
  <Canvas viewBox="374 1 1036 620" role="img" aria-label="1YRF structure">
    {bonds.map(([a, b], index) => (
      <g key={index}>
        <HalfBond from={a} to={b} />
        <HalfBond from={b} to={a} />
      </g>
    ))}
    {atoms.map((atom, index) => (
      <circle
        key={index}
        cx={atom.x}
        cy={atom.y}
        r={radius[atom.element]}
        fill={`url(#g${atom.element})`}
        stroke="#fb942b"
        strokeWidth="1.7"
      />
    ))}
  </Canvas>
);

const residues = [
  "LEU 1", "SER 2", "ASP 3", "GLU 4", "ASP 5", "PHE 6", "LYS 7", "ALA 8", "VAL 9",
  "PHE 10", "GLY 11", "MET 12", "THR 13", "ARG 14", "SER 15", "ALA 16", "PHE 17",
];

const Node = ({ level, label, icon, open, tail }) => (
  <TreeRow $level={level}>
    <Expander open={open} tail={tail} />
    <TreeLabel>
      <CheckBox defaultChecked />
      <TreeIcon>{icon}</TreeIcon>
      <TreeText>{label}</TreeText>
    </TreeLabel>
  </TreeRow>
);

function StructurePanel() {
  return (
    <Panel $width="371px" $border="0 1px 1px 0">
      <PanelHeader $left="4px" $gap="4px">
        <DocumentIcon />
        <PanelTitle>1YRF - Default structure.sam</PanelTitle>
        <IconButton aria-label="Pin">
          <PinIcon />
        </IconButton>
        <IconButton aria-label="Close">
          <CloseIcon />
        </IconButton>
      </PanelHeader>
      <FilterRow $pad="2px 7px 0 8px">
        <FilterButtons>
          <IconButton aria-label="Smart filter">
            <SparkleIcon />
          </IconButton>
        </FilterButtons>
        <Field>
          <TextInput aria-label="Filter nodes" placeholder="Filter nodes... (Shift+F)" />
          <FieldIcon $side="right" $inset="4px">
            <Magnifier />
          </FieldIcon>
        </Field>
      </FilterRow>
      <FilterRow $pad="2px 7px 0 6px">
        <LookIn htmlFor="look-in">Look in</LookIn>
        <Field>
          <SelectInput id="look-in">
            <option>All nodes</option>
          </SelectInput>
          <FieldIcon $side="right" $inset="12px">
            <Triangle />
          </FieldIcon>
        </Field>
      </FilterRow>
      <TreeArea>
        <Tree>
          <TreeRow $level={0}>
            <Branch />
            <TreeIcon>
              <CameraIcon />
            </TreeIcon>
            <TreeText>Camera 1</TreeText>
          </TreeRow>
          <Node level={0} label="1YRF" icon={<ModelIcon />} open />
          <Node level={1} label="1YRF" icon={<LetterIcon letter="M" />} open />
          <Node level={2} label="PROT" icon={<LetterIcon letter="S" />} open />
          {residues.map((name) => (
            <Node key={name} level={3} label={name} icon={<LetterIcon letter="R" />} tail />
          ))}
        </Tree>
        <ScrollBar>
          <ScrollButton aria-label="Scroll up">
            <Arrow up />
          </ScrollButton>
          <ScrollTrack>
            <ScrollThumb />
          </ScrollTrack>
          <ScrollButton aria-label="Scroll down">
            <Arrow />
          </ScrollButton>
        </ScrollBar>
      </TreeArea>
      <Selection>
        <Bracket size={30}>
          <ThreeBalls />
        </Bracket>
        <SelectionText>Current selection: 356 nodes</SelectionText>
      </Selection>
      <Stats>
        <Stat>
          <StatIcon>
            <svg width="14" height="14" viewBox="0 0 14 14">
              <Ball x={4} y={3} r={2.9} />
              <Ball x={10.5} y={7} r={2.9} />
              <Ball x={4} y={11} r={2.9} />
            </svg>
          </StatIcon>
          C189, H67, N49, O50, S1
        </Stat>
        <Stat>
          <StatIcon>
            <BallIcon size={14} fill="gGrey" />
          </StatIcon>
          356 atoms (out of 356)
        </Stat>
        <Stat>
          <StatIcon />
          3855.97 Da (out of 3855.97 Da)
        </Stat>
      </Stats>
    </Panel>
  );
}

function ViewportArea() {
  return (
    <Viewport>
      <Molecule />
      <Bars>
        <ToolBar>
          <ModeButton>
            <RectCursor size={22} />
            <ModeName>Select</ModeName>
          </ModeButton>
          <ToolButton $height="32px" aria-label="Show selection">
            <EyeBalls />
          </ToolButton>
          <ToolButton $height="32px" aria-label="Hide selection">
            <EyeBalls dark />
          </ToolButton>
          <ToolButton $height="32px" aria-label="Add group">
            <SvgTool>
              <path d="M12.5 1.5a4.500 4.500 0 0 1 4.500 5c0 4 5 3.500 5 8s-6 3-9 5.500-10 2.500-10-2.500 6-5.500 5.500-10a5 5 0 0 1 4-6z" fill="#e8e02f" stroke="#16202d" strokeWidth="0.6" />
              <path d="M17.5 12v10M12.5 17h10" stroke="#16202d" strokeWidth="4" />
              <path d="M17.5 12.5v9M13 17h9" stroke="#fff" strokeWidth="2.4" />
            </SvgTool>
          </ToolButton>
        </ToolBar>
        <ToolBar>
          <FilterLabel htmlFor="selection-filter">Selection filter</FilterLabel>
          <SelectionField>
            <Field $height="22px">
              <SelectInput id="selection-filter" $left="24px">
                <option>Atoms</option>
              </SelectInput>
              <FieldIcon $side="left" $inset="6px">
                <BallIcon size={14} fill="gGrey" />
              </FieldIcon>
              <FieldIcon $side="right" $inset="12px">
                <Triangle />
              </FieldIcon>
            </Field>
          </SelectionField>
          {selectionTools.map((tool) => (
            <ToolButton key={tool.name} $width="31px" $height="32px" aria-label={tool.name}>
              <Bracket>{tool.icon}</Bracket>
            </ToolButton>
          ))}
        </ToolBar>
      </Bars>
      <Bars>
        <ToolBar $vertical>
          {tools.map((tool) => (
            <ToolButton key={tool.name} $active={tool.active} aria-label={tool.name}>
              {tool.icon}
              {tool.menu && (
                <Corner width="5" height="3" viewBox="0 0 5 3">
                  <path d="M0 0h5L2.5 3z" fill="#fff" />
                </Corner>
              )}
            </ToolButton>
          ))}
        </ToolBar>
        <ToolBar $vertical>
          {apps.map((app) => (
            <ToolButton key={app.name} $height="32px" aria-label={app.name}>
              {app.icon}
            </ToolButton>
          ))}
        </ToolBar>
      </Bars>
    </Viewport>
  );
}

const Add = ({ name }) => {
  const id = name.toLowerCase().replace(" ", "-");
  return (
    <Property $control>
      <PropertyName htmlFor={id}>{name}</PropertyName>
      <AddButton id={id}>Add</AddButton>
    </Property>
  );
};

const Value = ({ name, children }) => (
  <Property>
    <PropertyName as="span">{name}</PropertyName>
    <PropertyValue>{children}</PropertyValue>
  </Property>
);

const Section = ({ name, open, children }) => (
  <section>
    <SectionHeader aria-expanded={!!open}>
      <PlusMinus open={open} />
      {name}
    </SectionHeader>
    {children}
  </section>
);

function InspectorPanel() {
  return (
    <Panel $width="501px" $border="0 0 0 1px">
      <PanelHeader $left="6px" $gap="5px">
        <InspectorIcon />
        <PanelTitle>Inspector</PanelTitle>
        <IconButton aria-label="Pin">
          <PinIcon />
        </IconButton>
        <IconButton aria-label="Close">
          <CloseIcon />
        </IconButton>
      </PanelHeader>
      <FilterRow $pad="5px 7px 3px 8px">
        <FilterButtons>
          <IconButton aria-label="Show attributes">
            <AttributesIcon />
          </IconButton>
          <IconButton aria-label="Edit notes">
            <NotesIcon />
          </IconButton>
        </FilterButtons>
        <Field>
          <TextInput aria-label="Filter attributes" placeholder="Filter attributes... (Ctrl+i)" />
          <FieldIcon $side="right" $inset="4px">
            <Magnifier />
          </FieldIcon>
        </Field>
      </FilterRow>
      <Body>
        <GroupHeader aria-expanded>
          <PlusMinus open />
          <BallIcon size={28} fill="gDark" />
          <GroupName>Atom (356)</GroupName>
        </GroupHeader>
        <Section name="Chemistry" open>
          <Property>
            <PropertyName htmlFor="aromaticity">Aromaticity</PropertyName>
            <PropertyControls>
              <CheckBox id="aromaticity" defaultChecked />
              <IconButton aria-label="Remove aromaticity">
                <svg width="14" height="14" viewBox="0 0 14 14">
                  <path d="M2 2l10 10M12 2L2 12" stroke="#14202e" strokeWidth="5" />
                  <path d="M2 2l10 10M12 2L2 12" stroke="#a3c0e6" strokeWidth="3.4" />
                </svg>
              </IconButton>
            </PropertyControls>
          </Property>
          <Value name="Electronegativity">2.55</Value>
          <Add name="Resonance" />
        </Section>
        <Section name="Coarse graining" />
        <Section name="Display" />
        <Section name="Element" open>
          <Value name="Atomic weight">12.011 Da</Value>
          <Value name="Block">p</Value>
          <Property $control>
            <PropertyName htmlFor="element">Element</PropertyName>
            <Field>
              <SelectInput id="element">
                <option>Carbon (6)</option>
              </SelectInput>
              <FieldIcon $side="right" $inset="12px">
                <Triangle />
              </FieldIcon>
            </Field>
          </Property>
          <Value name="Element name">Carbon</Value>
          <Value name="Element symbol">C</Value>
          <Value name="Group">14</Value>
          <Add name="Hybridization" />
          <Add name="Oxidation state" />
          <Value name="Period">2</Value>
          <Value name="Subcategory">Reactive nonmetal</Value>
          <Add name="Water flag" />
        </Section>
        <Section name="Identity" />
        <Section name="Node" />
        <Section name="Other" />
      </Body>
    </Panel>
  );
}

function App() {
  return (
    <>
      <GlobalStyle />
      <Defs />
      <Screen>
        <StructurePanel />
        <ViewportArea />
        <InspectorPanel />
        <Edge />
      </Screen>
    </>
  );
}

export default App;
